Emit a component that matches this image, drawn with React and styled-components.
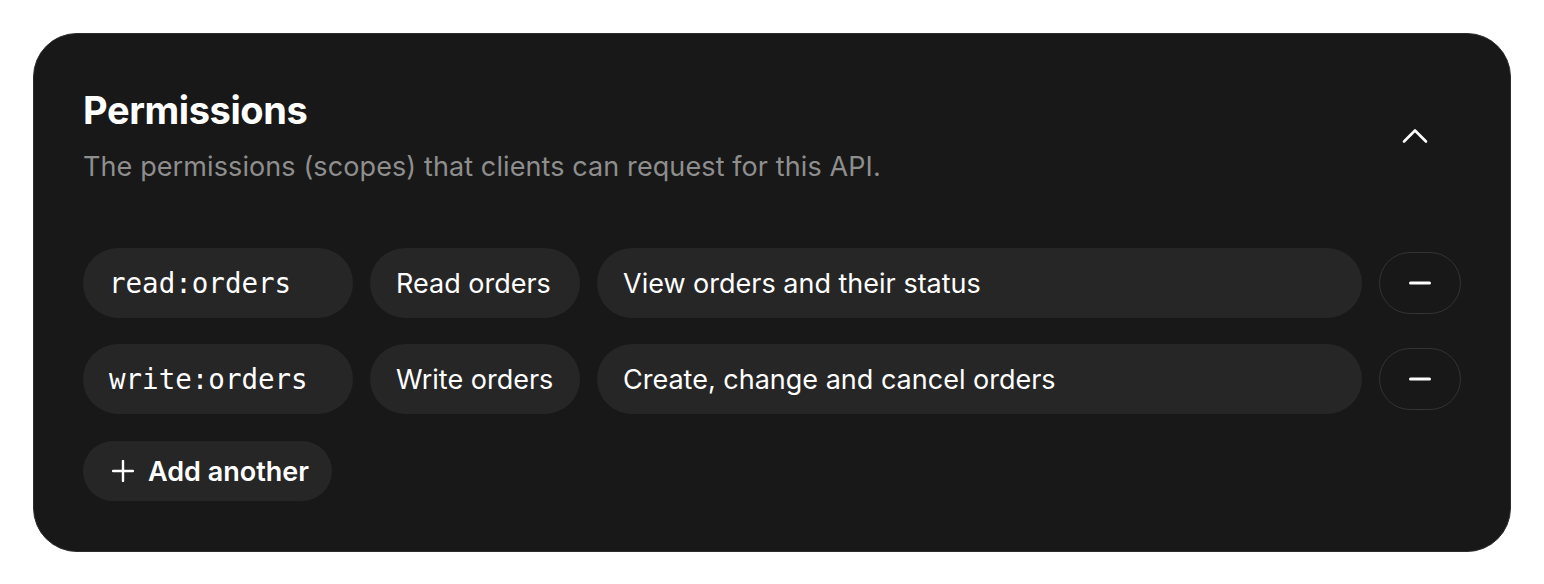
import React from 'react'
import styled, { createGlobalStyle } from 'styled-components'

const GlobalStyle = createGlobalStyle`
  body {
    margin: 0;
    background: #ffffff;
    font-family: Inter, "Noto Sans", sans-serif;
  }
`

const Page = styled.div`
  padding: 33px 33px 32px 33px;
`

const Card = styled.section`
  background: #181818;
  border: 1px solid #2c2c2c;
  border-radius: 44px;
  padding: 54px 49px 50px 49px;
  display: flex;
  flex-direction: column;
`

const Header = styled.div`
  display: flex;
  align-items: center;
  justify-content: space-between;
`

const Title = styled.h2`
  margin: 0;
  color: #ffffff;
  font-size: 38px;
  font-weight: 700;
  letter-spacing: -0.4px;
  line-height: 44px;
`

const Subtitle = styled.p`
  margin: 18px 0 0;
  color: #8e8e8e;
  font-size: 27px;
  letter-spacing: 0.1px;
  line-height: 34px;
`

const Toggle = styled.button`
  background: none;
  border: none;
  padding: 0;
  margin-right: 33px;
  color: #ffffff;
  display: flex;
  cursor: pointer;
`

const Rows = styled.div`
  margin-top: 64px;
  display: flex;
  flex-direction: column;
  gap: 26px;
`

const Row = styled.div`
  display: flex;
  align-items: center;
  gap: 17px;
`

const Field = styled.div`
  height: 70px;
  border-radius: 35px;
  background: #262626;
  color: #ffffff;
  display: flex;
  align-items: center;
  padding: 0 26px;
  box-sizing: border-box;
  font-size: ${(p) => (p.$mono ? '27.5px' : '27px')};
  font-family: ${(p) => (p.$mono ? '"DejaVu Sans Mono", monospace' : 'Inter, "Noto Sans", sans-serif')};
  width: ${(p) => (p.$width ? `${p.$width}px` : 'auto')};
  flex: ${(p) => (p.$grow ? 1 : 'none')};
  white-space: nowrap;
`

const RemoveButton = styled.button`
  width: 82px;
  height: 62px;
  border-radius: 31px;
  border: 1.5px solid #333333;
  background: transparent;
  color: #ffffff;
  display: flex;
  align-items: center;
  justify-content: center;
  flex: none;
  cursor: pointer;
`

const AddButton = styled.button`
  margin-top: 27px;
  align-self: flex-start;
  height: 60px;
  border-radius: 30px;
  border: none;
  background: #262626;
  color: #ffffff;
  display: flex;
  align-items: center;
  gap: 14px;
  padding: 0 23px 0 29px;
  font-family: Inter, "Noto Sans", sans-serif;
  font-size: 27px;
  font-weight: 600;
  cursor: pointer;
`

const scopes = [
  { scope: 'read:orders', name: 'Read orders', description: 'View orders and their status' },
  { scope: 'write:orders', name: 'Write orders', description: 'Create, change and cancel orders' },
]

export default function App() {
  return (
    <>
      <GlobalStyle />
      <Page>
        <Card>
          <Header>
            <div>
              <Title>Permissions</Title>
              <Subtitle>The permissions (scopes) that clients can request for this API.</Subtitle>
            </div>
            <Toggle aria-label="Collapse">
              <svg width="26" height="16" viewBox="0 0 26 16" fill="none" stroke="currentColor" strokeWidth="2.6" strokeLinecap="round" strokeLinejoin="round">
                <path d="M2 13.5 L13 2.5 L24 13.5" />
              </svg>
            </Toggle>
          </Header>
          <Rows>
            {scopes.map((s) => (
              <Row key={s.scope}>
                <Field $mono $width={270}>{s.scope}</Field>
                <Field $width={210}>{s.name}</Field>
                <Field $grow>{s.description}</Field>
                <RemoveButton aria-label="Remove">
                  <svg width="22" height="4" viewBox="0 0 22 4">
                    <rect x="0" y="0.5" width="22" height="3" rx="1.5" fill="currentColor" />
                  </svg>
                </RemoveButton>
              </Row>
            ))}
          </Rows>
          <AddButton>
            <svg width="22" height="22" viewBox="0 0 22 22" fill="none" stroke="currentColor" strokeWidth="2.4" strokeLinecap="round">
              <path d="M11 1 V21 M1 11 H21" />
            </svg>
            Add another
          </AddButton>
        </Card>
      </Page>
    </>
  )
}
